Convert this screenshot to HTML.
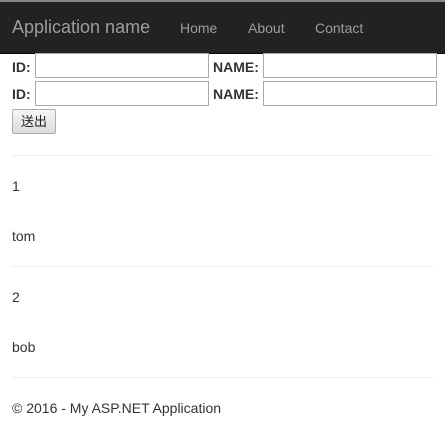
<!DOCTYPE html>
<html><head><style>
*{margin:0;padding:0;box-sizing:border-box}
body{width:445px;height:432px;background:#fff;font-family:"Liberation Sans",Arial,sans-serif;font-size:14px;color:#333;position:relative;overflow:hidden}
.nav{position:absolute;left:0;top:0;width:445px;height:54px;background:#222;border-bottom:1px solid #080808;border-top:2px solid #888}
.a{position:absolute;line-height:20px}
.brand{font-size:18px;color:#9d9d9d;left:12px;top:17px}
.nl{color:#9d9d9d;top:18px}
.in{position:absolute;height:25px;border:1px solid #a9a9a9;background:#fff}
b{position:absolute;font-size:14px;color:#333;line-height:16px}
.btn{position:absolute;left:12px;top:109px;width:44px;height:25px;border:1px solid #adadad;border-radius:2px;background:linear-gradient(#f6f6f6,#dcdcdc);font-family:"Liberation Sans","Noto Sans CJK SC",sans-serif;font-size:13px;text-align:center;line-height:23px;color:#222}
.hr{position:absolute;left:12px;width:421px;height:1px;background:#eee}
</style></head><body>
<div class="nav"></div>
<div class="a brand">Application name</div>
<div class="a nl" style="left:180px">Home</div>
<div class="a nl" style="left:248px">About</div>
<div class="a nl" style="left:315px">Contact</div>
<b style="left:12px;top:59px">ID:</b>
<div class="in" style="left:35px;top:53px;width:174px"></div>
<b style="left:213px;top:59px">NAME:</b>
<div class="in" style="left:263px;top:53px;width:174px"></div>
<b style="left:12px;top:86px">ID:</b>
<div class="in" style="left:35px;top:81px;width:174px"></div>
<b style="left:213px;top:86px">NAME:</b>
<div class="in" style="left:263px;top:81px;width:174px"></div>
<div class="btn">送出</div>
<div class="hr" style="top:155px"></div>
<div class="a" style="left:12px;top:176px">1</div>
<div class="a" style="left:12px;top:226px">tom</div>
<div class="hr" style="top:266px"></div>
<div class="a" style="left:12px;top:287px">2</div>
<div class="a" style="left:12px;top:337px">bob</div>
<div class="hr" style="top:377px"></div>
<div class="a" style="left:12px;top:398px">© 2016 - My ASP.NET Application</div>
</body></html>
